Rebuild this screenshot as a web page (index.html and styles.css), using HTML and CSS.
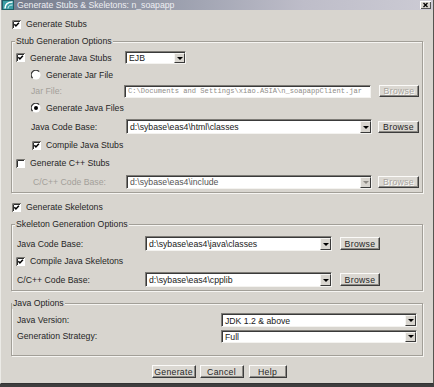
FILE: index.html
```html
<!DOCTYPE html>
<html>
<head>
<meta charset="utf-8">
<link rel="stylesheet" href="styles.css">
</head>
<body>
<div class="window">
  <div class="titlebar">
    <svg class="app-icon" viewBox="0 0 12 10" width="12" height="10">
      <rect x="0.5" y="0.5" width="11" height="9" fill="#3d9ea6" stroke="#1f5f66"/>
      <path d="M3 8.5 C3 4, 6 2, 10.5 2" stroke="#ffffff" stroke-width="1.6" fill="none"/>
      <path d="M6 8.5 C6 6, 8 5, 10.5 5" stroke="#d8f2f4" stroke-width="1" fill="none"/>
    </svg>
    <span class="title">Generate Stubs &amp; Skeletons: n_soapapp</span>
    <div class="close">
      <svg viewBox="0 0 11 8" width="11" height="8"><path d="M3.5 2 L7.5 6 M7.5 2 L3.5 6" stroke="#000" stroke-width="1.3"/></svg>
    </div>
  </div>

  <div class="content">
    <div class="row top-row">
      <label class="check">
        <svg class="cb" viewBox="0 0 9 9" width="9" height="9"><rect width="9" height="9" fill="#fff"/><path d="M0.5 9V0.5H9" stroke="#7b7974" fill="none"/><path d="M1.5 8V1.5H8" stroke="#2e2e2e" fill="none"/><path d="M2.3 4.3l1.6 1.6 3-3.2" stroke="#000" stroke-width="1.5" fill="none"/></svg>
        <span>Generate Stubs</span>
      </label>
    </div>

    <div class="group g-stub">
      <div class="legend">Stub Generation Options</div>
      <div class="row h17">
        <label class="check w109">
          <svg class="cb" viewBox="0 0 9 9" width="9" height="9"><rect width="9" height="9" fill="#fff"/><path d="M0.5 9V0.5H9" stroke="#7b7974" fill="none"/><path d="M1.5 8V1.5H8" stroke="#2e2e2e" fill="none"/><path d="M2.3 4.3l1.6 1.6 3-3.2" stroke="#000" stroke-width="1.5" fill="none"/></svg>
          <span>Generate Java Stubs</span>
        </label>
        <div class="combo c-ejb"><span class="val">EJB</span><span class="arrow"></span></div>
      </div>
      <div class="row h17 ind15">
        <label class="check">
          <svg class="rb" viewBox="0 0 10 10" width="10" height="10"><circle cx="5" cy="5" r="4.5" fill="#fff"/><path d="M1.6 8.1 A4.4 4.4 0 0 1 8.1 1.6" stroke="#3a3a3a" stroke-width="1.3" fill="none"/></svg>
          <span>Generate Jar File</span>
        </label>
      </div>
      <div class="row h16 ind15">
        <span class="lbl disabled w93">Jar File:</span>
        <div class="field f-jar">C:\Documents and Settings\xiao.ASIA\n_soapappClient.jar</div>
        <div class="btn b-browse gap8 disabled">Browse</div>
      </div>
      <div class="row h18 ind15">
        <label class="check">
          <svg class="rb" viewBox="0 0 10 10" width="10" height="10"><circle cx="5" cy="5" r="4.5" fill="#fff"/><path d="M1.6 8.1 A4.4 4.4 0 0 1 8.1 1.6" stroke="#3a3a3a" stroke-width="1.3" fill="none"/><circle cx="5" cy="5" r="2" fill="#000"/></svg>
          <span>Generate Java Files</span>
        </label>
      </div>
      <div class="row h19 ind15">
        <span class="lbl w95">Java Code Base:</span>
        <div class="combo c-wide h15"><span class="val">d:\sybase\eas4\html\classes</span><span class="arrow"></span></div>
        <div class="btn b-browse2 gap6">Browse</div>
      </div>
      <div class="row h18 ind16">
        <label class="check">
          <svg class="cb" viewBox="0 0 9 9" width="9" height="9"><rect width="9" height="9" fill="#fff"/><path d="M0.5 9V0.5H9" stroke="#7b7974" fill="none"/><path d="M1.5 8V1.5H8" stroke="#2e2e2e" fill="none"/><path d="M2.3 4.3l1.6 1.6 3-3.2" stroke="#000" stroke-width="1.5" fill="none"/></svg>
          <span>Compile Java Stubs</span>
        </label>
      </div>
      <div class="row h18">
        <label class="check">
          <svg class="cb" viewBox="0 0 9 9" width="9" height="9"><rect width="9" height="9" fill="#fff"/><path d="M0.5 9V0.5H9" stroke="#7b7974" fill="none"/><path d="M1.5 8V1.5H8" stroke="#2e2e2e" fill="none"/></svg>
          <span>Generate C++ Stubs</span>
        </label>
      </div>
      <div class="row h19 ind17">
        <span class="lbl disabled w93">C/C++ Code Base:</span>
        <div class="combo c-wide h14 off"><span class="val">d:\sybase\eas4\include</span><span class="arrow"></span></div>
        <div class="btn b-browse2 gap6 disabled">Browse</div>
      </div>
    </div>

    <div class="row top-row">
      <label class="check">
        <svg class="cb" viewBox="0 0 9 9" width="9" height="9"><rect width="9" height="9" fill="#fff"/><path d="M0.5 9V0.5H9" stroke="#7b7974" fill="none"/><path d="M1.5 8V1.5H8" stroke="#2e2e2e" fill="none"/><path d="M2.3 4.3l1.6 1.6 3-3.2" stroke="#000" stroke-width="1.5" fill="none"/></svg>
        <span>Generate Skeletons</span>
      </label>
    </div>

    <div class="group g-skel">
      <div class="legend">Skeleton Generation Options</div>
      <div class="row h17">
        <span class="lbl ind1 w128">Java Code Base:</span>
        <div class="combo c-mid h15"><span class="val">d:\sybase\eas4\java\classes</span><span class="arrow"></span></div>
        <div class="btn b-browse gap8 h13">Browse</div>
      </div>
      <div class="row h18">
        <label class="check">
          <svg class="cb" viewBox="0 0 9 9" width="9" height="9"><rect width="9" height="9" fill="#fff"/><path d="M0.5 9V0.5H9" stroke="#7b7974" fill="none"/><path d="M1.5 8V1.5H8" stroke="#2e2e2e" fill="none"/><path d="M2.3 4.3l1.6 1.6 3-3.2" stroke="#000" stroke-width="1.5" fill="none"/></svg>
          <span>Compile Java Skeletons</span>
        </label>
      </div>
      <div class="row h19">
        <span class="lbl ind1 w128">C/C++ Code Base:</span>
        <div class="combo c-mid h15"><span class="val">d:\sybase\eas4\cpplib</span><span class="arrow"></span></div>
        <div class="btn b-browse gap8 h13">Browse</div>
      </div>
    </div>

    <div class="group g-java">
      <div class="legend l-java">Java Options</div>
      <div class="row h16">
        <span class="lbl w204">Java Version:</span>
        <div class="combo c-java h14"><span class="val">JDK 1.2 &amp; above</span><span class="arrow"></span></div>
      </div>
      <div class="row h16">
        <span class="lbl w204">Generation Strategy:</span>
        <div class="combo c-java h13"><span class="val">Full</span><span class="arrow"></span></div>
      </div>
    </div>

    <div class="actions">
      <div class="btn b-gen">Generate</div>
      <div class="btn b-gen">Cancel</div>
      <div class="btn b-help">Help</div>
    </div>
  </div>
</div>
</body>
</html>
```

FILE: styles.css
```css
* { box-sizing: border-box; }
html, body { margin: 0; padding: 0; }
body {
  width: 434px;
  height: 387px;
  overflow: hidden;
  background: #3e3e3e;
  font-family: "Liberation Sans", Arial, sans-serif;
  font-size: 8.7px;
  color: #262626;
}
.window {
  width: 434px;
  height: 384px;
  background: #d8d5cf;
  border-left: 1px solid #ecebe7;
  border-right: 1px solid #55544f;
  border-bottom: 1px solid #333;
  display: flex;
  flex-direction: column;
}
.titlebar {
  height: 10px;
  flex: none;
  display: flex;
  align-items: center;
  background: linear-gradient(90deg, #737a8a 0%, #959aa9 35%, #bebdc9 70%, #cccbd4 100%);
}
.app-icon { margin-left: 1px; flex: none; display: block; }
.title {
  margin-left: 3px;
  color: #eeeef2;
  line-height: 10px;
  white-space: nowrap;
}
.close {
  margin-left: auto;
  margin-right: 2px;
  width: 11px;
  height: 8px;
  background: #d8d5cf;
  box-shadow: inset 1px 1px 0 #fff, inset -1px -1px 0 #555;
}
.close svg { display: block; }

.content {
  flex: 1;
  display: flex;
  flex-direction: column;
  padding: 0 10px;
}
.row {
  display: flex;
  align-items: center;
  flex: none;
  white-space: nowrap;
}
.top-row { height: 14px; margin-top: 7px; padding-left: 1px; }
.h13 { height: 13px; }
.h14 { height: 14px; }
.h15 { height: 15px; }
.h16 { height: 16px; }
.h17 { height: 17px; }
.h18 { height: 18px; }
.h19 { height: 19px; }
.ind1 { margin-left: 1px; }
.ind15 { padding-left: 15px; }
.ind16 { padding-left: 16px; }
.ind17 { padding-left: 17px; }

.check { display: flex; align-items: center; gap: 5px; flex: none; }
.cb, .rb { display: block; flex: none; }
.w93 { width: 93px; }
.w95 { width: 95px; }
.w109 { width: 109px; }
.w128 { width: 128px; }
.w204 { width: 204px; }
.lbl { flex: none; }
.disabled { color: #a3a09a; }

.group {
  position: relative;
  flex: none;
  margin-top: 10px;
  border: 1px solid #a29f98;
  box-shadow: inset 1px 1px 0 #f6f5f2, 1px 1px 0 #f6f5f2;
  display: flex;
  flex-direction: column;
}
.legend {
  position: absolute;
  top: -6px;
  left: 3px;
  padding: 0 1px;
  line-height: 11px;
  background: #d8d5cf;
  white-space: nowrap;
}
.l-java { left: 0; }
.g-stub { padding: 7px 0 1px 4px; }
.g-skel { padding: 10px 0 1px 4px; }
.g-java { margin-top: 12px; padding: 8px 0 11px 5px; }

.combo, .field {
  flex: none;
  display: flex;
  align-items: stretch;
  background: #fff;
  border: 1px solid;
  border-color: #7e7c77 #f4f3f0 #f4f3f0 #7e7c77;
  box-shadow: inset 1px 1px 0 #3a3a3a;
}
.combo .val {
  flex: 1;
  display: flex;
  align-items: center;
  padding-left: 3px;
  padding-top: 1px;
  color: #1a1a1a;
  overflow: hidden;
}
.combo.off .val { color: #555; }
.combo .arrow {
  flex: none;
  width: 11px;
  margin-top: 1px;
  background: #d8d5cf;
  border: 1px solid;
  border-color: #f6f5f2 #3a3a3a #3a3a3a #f6f5f2;
  display: flex;
  align-items: center;
  justify-content: center;
}
.combo .arrow::after {
  content: "";
  width: 0;
  height: 0;
  border-left: 3px solid transparent;
  border-right: 3px solid transparent;
  border-top: 3px solid #000;
}
.combo.off .arrow::after { border-top-color: #8d8a84; }
.c-ejb { width: 61px; height: 13px; }
.c-wide { width: 246px; }
.c-mid { width: 187px; }
.c-java { width: 196px; }

.f-jar {
  width: 247px;
  height: 13px;
  align-items: center;
  padding-left: 3px;
  font-family: "Liberation Mono", "Courier New", monospace;
  font-size: 7.1px;
  color: #8f8d88;
  overflow: hidden;
  white-space: nowrap;
}

.btn {
  flex: none;
  display: flex;
  align-items: center;
  justify-content: center;
  height: 12px;
  background: #dbd8d2;
  border: 1px solid;
  border-color: #fbfaf8 #3c3c3c #3c3c3c #fbfaf8;
  box-shadow: inset -1px -1px 0 #8c8a85;
  color: #262626;
  letter-spacing: 0.3px;
  white-space: nowrap;
}
.btn.disabled { color: #a9a6a0; text-shadow: 1px 1px 0 #fff; }
.btn.h13 { height: 13px; }
.b-browse { width: 40px; }
.b-browse2 { width: 41px; }
.gap6 { margin-left: 6px; }
.gap8 { margin-left: 8px; }

.actions {
  flex: none;
  margin-top: 9px;
  display: flex;
  justify-content: center;
  gap: 4px;
  padding-left: 4px;
}
.actions .btn { height: 13px; }
.b-gen { width: 44px; }
.b-help { width: 38px; margin-left: 1px; }
```
